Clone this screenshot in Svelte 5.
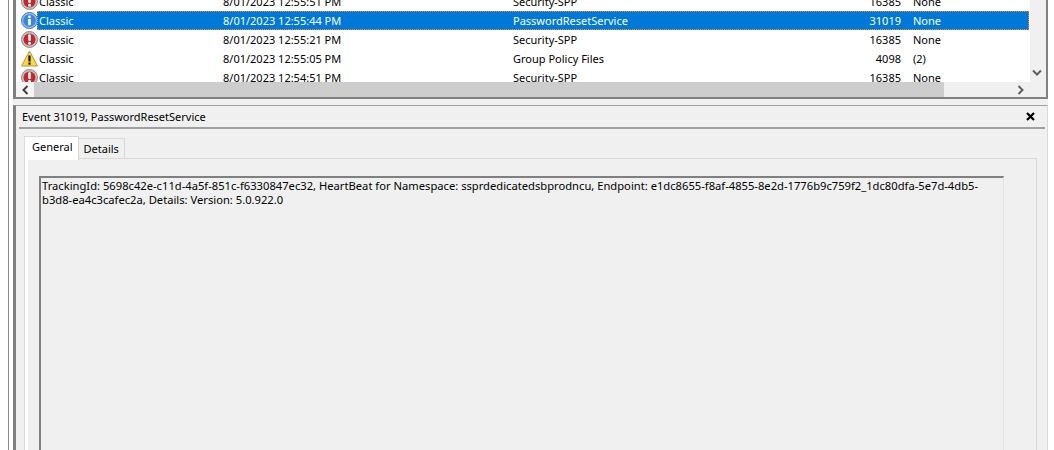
<script>
  const rows = [
    { level: 'error', date: '8/01/2023 12:55:51 PM', source: 'Security-SPP', id: '16385', cat: 'None' },
    { level: 'info', date: '8/01/2023 12:55:44 PM', source: 'PasswordResetService', id: '31019', cat: 'None', selected: true },
    { level: 'error', date: '8/01/2023 12:55:21 PM', source: 'Security-SPP', id: '16385', cat: 'None' },
    { level: 'warn', date: '8/01/2023 12:55:05 PM', source: 'Group Policy Files', id: '4098', cat: '(2)' },
    { level: 'error', date: '8/01/2023 12:54:51 PM', source: 'Security-SPP', id: '16385', cat: 'None' }
  ];
</script>

<div class="window">
  <div class="inner">
    <section class="events">
      <div class="list-area">
        <div class="list">
          {#each rows as row}
            <div class="row">
              <span class="icon">
                {#if row.level === 'error'}
                  <svg width="17" height="17" viewBox="0 0 17 17">
                    <circle cx="8.5" cy="8.5" r="8" fill="#c4c4c4" stroke="#8a8a8a" />
                    <circle cx="8.5" cy="8.5" r="6" fill="#c8242b" />
                    <rect x="7.2" y="3.3" width="2.6" height="6.7" rx="1" fill="#fff" />
                    <circle cx="8.5" cy="12.3" r="1.5" fill="#fff" />
                  </svg>
                {:else if row.level === 'info'}
                  <svg width="17" height="17" viewBox="0 0 17 17">
                    <circle cx="8.5" cy="8.5" r="8" fill="#8fc0f0" stroke="#3f78bd" />
                    <circle cx="8.5" cy="8.5" r="6.2" fill="#3d85d6" />
                    <circle cx="8.5" cy="4.8" r="1.4" fill="#fff" />
                    <rect x="7.2" y="7" width="2.6" height="6.2" fill="#fff" />
                  </svg>
                {:else}
                  <svg width="17" height="17" viewBox="0 0 17 17">
                    <path d="M8.5 1 L16.5 16 H0.5 Z" fill="#fdd835" stroke="#a89a5a" stroke-linejoin="round" />
                    <rect x="7.4" y="5.5" width="2.2" height="6" fill="#111" />
                    <rect x="7.4" y="12.5" width="2.2" height="2.2" fill="#111" />
                  </svg>
                {/if}
              </span>
              <div class="cells" class:selected={row.selected}>
                <span class="level">Classic</span>
                <span class="date">{row.date}</span>
                <span class="source">{row.source}</span>
                <span class="id">{row.id}</span>
                <span class="cat">{row.cat}</span>
              </div>
            </div>
          {/each}
        </div>
        <div class="vscroll">
          <svg width="10" height="7" viewBox="0 0 10 7">
            <path d="M1 1.5 L5 5.5 L9 1.5" fill="none" stroke="#606060" stroke-width="2" />
          </svg>
        </div>
      </div>
      <div class="hscroll">
        <div class="arrow left">
          <svg width="7" height="10" viewBox="0 0 7 10">
            <path d="M5.5 1 L1.5 5 L5.5 9" fill="none" stroke="#404040" stroke-width="2" />
          </svg>
        </div>
        <div class="thumb"></div>
        <div class="arrow right">
          <svg width="7" height="10" viewBox="0 0 7 10">
            <path d="M1.5 1 L5.5 5 L1.5 9" fill="none" stroke="#606060" stroke-width="2" />
          </svg>
        </div>
      </div>
    </section>

    <div class="splitter"></div>

    <section class="detail">
      <header class="detail-head">
        <span>Event 31019, PasswordResetService</span>
        <svg width="9" height="9" viewBox="0 0 9 9">
          <path d="M1 1 L8 8 M8 1 L1 8" stroke="#000" stroke-width="2.2" />
        </svg>
      </header>
      <div class="tabs">
        <div class="tab active">General</div>
        <div class="tab">Details</div>
      </div>
      <div class="tab-body">
        <div class="tab-fill">
          <div class="message">TrackingId: 5698c42e-c11d-4a5f-851c-f6330847ec32, HeartBeat for Namespace: ssprdedicatedsbprodncu, Endpoint: e1dc8655-f8af-4855-8e2d-1776b9c759f2_1dc80dfa-5e7d-4db5-b3d8-ea4c3cafec2a, Details: Version: 5.0.922.0</div>
        </div>
      </div>
    </section>
  </div>
</div>

<style>
  :global(body) {
    margin: 0;
    background: #fff;
  }

  .window {
    width: 1054px;
    height: 450px;
    overflow: hidden;
    box-sizing: border-box;
    padding-left: 8px;
    font-family: "Noto Sans", sans-serif;
    font-size: 11px;
    color: #000;
  }

  .inner {
    width: 1040px;
    height: 450px;
    box-sizing: border-box;
    border-left: 1px solid #8a8a8a;
    padding-left: 4px;
    display: flex;
    flex-direction: column;
  }

  .events {
    height: 99px;
    box-sizing: border-box;
    border-left: 3px solid #808080;
    border-right: 2px solid #808080;
    border-bottom: 2px solid #808080;
    background: #f0f0f0;
    flex: none;
  }

  .splitter {
    height: 6px;
    flex: none;
    background: #f0f0f0;
  }

  .list-area {
    height: 82px;
    display: flex;
    overflow: hidden;
  }

  .list {
    width: 1014px;
    flex: none;
    background: #fff;
    padding: 0 1px 0 5px;
    box-sizing: border-box;
    overflow: hidden;
  }

  .row {
    display: flex;
    height: 19px;
    align-items: center;
  }

  .row:first-child {
    margin-top: -8px;
  }

  .icon {
    width: 16px;
    height: 17px;
    flex: none;
  }

  .cells {
    flex: 1;
    height: 19px;
    display: grid;
    grid-template-columns: 184px 290px 1fr 48px 128px;
    align-items: center;
    padding-left: 2px;
    box-sizing: border-box;
    line-height: 19px;
    white-space: nowrap;
  }

  .cells.selected {
    background: #0078d7;
    color: #fff;
    outline: 1px dotted #e8903c;
    outline-offset: -1px;
  }

  .id {
    text-align: right;
  }

  .cat {
    padding-left: 12px;
  }

  .vscroll {
    flex: 1;
    display: flex;
    align-items: flex-end;
    justify-content: center;
    padding: 0 2px 6px 0;
    box-sizing: border-box;
  }

  .hscroll {
    height: 15px;
    display: flex;
    align-items: stretch;
  }

  .arrow {
    display: flex;
    align-items: center;
    justify-content: center;
  }

  .arrow.left {
    width: 18px;
    background: #f5f5f5;
  }

  .arrow.right {
    flex: 1;
    justify-content: flex-start;
    padding-left: 73px;
  }

  .thumb {
    width: 910px;
    background: #cdcdcd;
  }

  .detail {
    flex: 1;
    min-height: 0;
    background: #f0f0f0;
    border-left: 3px solid #808080;
    border-top: 1px solid #a0a0a0;
    border-right: 1px solid #d9d9d9;
    box-sizing: border-box;
    display: flex;
    flex-direction: column;
    padding-left: 3px;
  }

  .detail-head {
    height: 23px;
    flex: none;
    box-sizing: border-box;
    display: flex;
    align-items: center;
    justify-content: space-between;
    border-bottom: 2px solid #a0a0a0;
    padding: 0 10px 0 3px;
    margin-right: 2px;
  }

  .tabs {
    height: 29px;
    flex: none;
    box-sizing: border-box;
    display: flex;
    align-items: flex-end;
    padding-left: 5px;
    position: relative;
    z-index: 1;
  }

  .tab {
    height: 20px;
    box-sizing: border-box;
    padding: 0 5px;
    border: 1px solid #d9d9d9;
    border-bottom: none;
    border-left: none;
    line-height: 20px;
  }

  .tab.active {
    height: 24px;
    margin-bottom: -2px;
    background: #fff;
    border-left: 1px solid #d9d9d9;
    padding: 0 5px 0 7px;
    line-height: 20px;
  }

  .tab-body {
    flex: 1;
    min-height: 0;
    margin: 0 10px -10px 5px;
    border: 1px solid #d9d9d9;
  }

  .tab-fill {
    height: 100%;
    box-sizing: border-box;
    border-left: 3px solid #fff;
    padding: 17px 32px 0 11px;
  }

  .message {
    height: 400px;
    box-sizing: border-box;
    background: #f0f0f0;
    border-top: 2px solid #808080;
    border-left: 2px solid #808080;
    border-right: 1px solid #e3e3e3;
    padding: 1px 12px 0 1px;
    font-size: 11.2px;
    line-height: 14px;
  }
</style>
